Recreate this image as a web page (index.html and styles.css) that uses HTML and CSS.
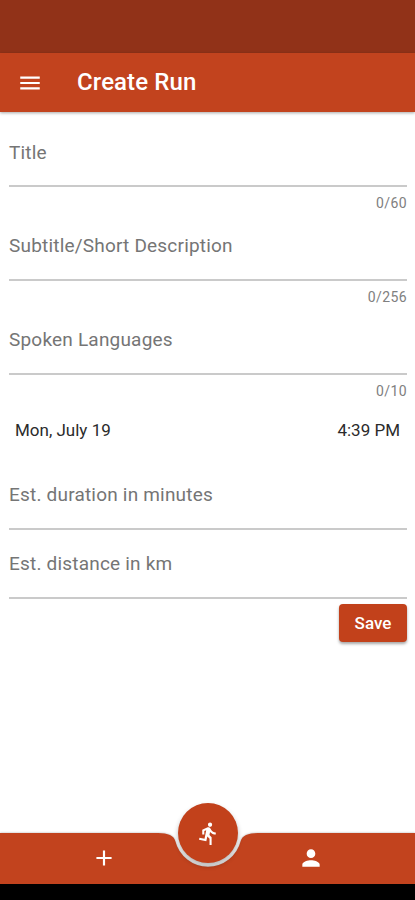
FILE: index.html
```html
<!DOCTYPE html>
<html lang="en">
<head>
    <meta charset="UTF-8">
    <meta name="viewport" content="width=device-width, initial-scale=1.0">
    <title>Create Run</title>
    <link rel="stylesheet" href="styles.css">
</head>
<body>
    <div class="status-bar"></div>
    <header class="app-bar">
        <svg class="menu-icon" viewBox="0 0 24 24"><path d="M3 18h18v-2H3v2zm0-5h18v-2H3v2zm0-7v2h18V6H3z"/></svg>
        <h1>Create Run</h1>
    </header>

    <main class="run-form">
        <div class="field field-first">
            <label>Title</label>
        </div>
        <div class="counter">0/60</div>

        <div class="field">
            <label>Subtitle/Short Description</label>
        </div>
        <div class="counter">0/256</div>

        <div class="field">
            <label>Spoken Languages</label>
        </div>
        <div class="counter">0/10</div>

        <div class="date-row">
            <span class="date">Mon, July 19</span>
            <span class="time">4:39 PM</span>
        </div>

        <div class="field">
            <label>Est. duration in minutes</label>
        </div>
        <div class="field">
            <label>Est. distance in km</label>
        </div>

        <button class="save-button">Save</button>
    </main>

    <nav class="bottom-bar">
        <!-- Bar background with the notch for the round button -->
        <svg class="bar-shape" viewBox="0 0 415 51">
            <path d="M0 0H158Q173.3 0 175.3 8.1A33.7 33.7 0 0 0 240.7 8.1Q242.7 0 258 0H415V51H0Z"/>
        </svg>
        <div class="nav-item">
            <svg viewBox="0 0 24 24"><path d="M19 13h-6v6h-2v-6H5v-2h6V5h2v6h6v2z"/></svg>
        </div>
        <div class="nav-item">
            <svg viewBox="0 0 24 24"><path d="M12 12c2.21 0 4-1.79 4-4s-1.79-4-4-4-4 1.79-4 4 1.79 4 4 4zm0 2c-2.67 0-8 1.34-8 4v2h16v-2c0-2.66-5.33-4-8-4z"/></svg>
        </div>
        <div class="run-button">
            <svg viewBox="0 0 24 24"><path d="M13.49 5.48c1.1 0 2-.9 2-2s-.9-2-2-2-2 .9-2 2 .9 2 2 2zm-3.6 13.9l1-4.4 2.1 2v6h2v-7.5l-2.1-2 .6-3c1.3 1.5 3.3 2.5 5.5 2.5v-2c-1.9 0-3.5-1-4.3-2.4l-1-1.6c-.4-.6-1-1-1.7-1-.3 0-.5.1-.8.1l-5.2 2.2v4.7h2v-3.4l1.8-.7-1.6 8.1-4.9-1-.4 2 7 1.4z"/></svg>
        </div>
    </nav>
    <div class="system-bar"></div>
</body>
</html>
```

FILE: styles.css
```css
* {
    box-sizing: border-box;
}

body {
    font-family: Roboto, "Liberation Sans", sans-serif;
    background-color: #fff;
    display: flex;
    flex-direction: column;
    height: 100vh;
    margin: 0;
    overflow: hidden;
}

svg {
    display: block;
    fill: #fff;
}

.status-bar {
    height: 53px;
    background: #913218;
}

.app-bar {
    display: flex;
    align-items: center;
    height: 59px;
    padding-left: 17px;
    background: #c2431e;
    box-shadow: 0 1px 3px rgba(0, 0, 0, 0.35);
}

.menu-icon {
    width: 26px;
    height: 26px;
}

.app-bar h1 {
    margin: 0 0 1px 34px;
    color: #fff;
    font-size: 24px;
    font-weight: 500;
    letter-spacing: 0.1px;
}

.run-form {
    display: flex;
    flex-direction: column;
    flex: 1;
    padding: 6px 8px 0 9px;
}

.field {
    display: flex;
    align-items: center;
    height: 69px;
    border-bottom: 2px solid #cacaca;
    color: #757575;
    font-size: 19px;
    letter-spacing: 0.2px;
}

.field-first {
    padding-top: 1px;
}

.counter {
    height: 25px;
    padding-top: 7px;
    color: #808080;
    font-size: 14px;
    line-height: 19px;
    letter-spacing: 0.4px;
    text-align: right;
}

.date-row {
    display: flex;
    justify-content: space-between;
    height: 61px;
    padding: 18px 7px 0 6px;
    color: #2b2b2b;
    font-size: 17px;
    line-height: 24px;
}

.save-button {
    align-self: flex-end;
    width: 68px;
    height: 38px;
    margin-top: 5px;
    padding: 0;
    background: #c2411b;
    color: #fff;
    border: none;
    border-radius: 4px;
    box-shadow: 0 2px 3px rgba(0, 0, 0, 0.35);
    font-family: inherit;
    font-size: 17px;
    font-weight: 500;
}

/* Bottom navigation */
.bottom-bar {
    position: relative;
    display: flex;
    height: 51px;
}

.bar-shape {
    position: absolute;
    top: 0;
    left: 0;
    width: 415px;
    height: 51px;
    fill: #c2431e;
    overflow: visible;
    filter: drop-shadow(0 0 1px rgba(0, 0, 0, 0.3));
}

.nav-item {
    position: relative;
    display: flex;
    flex: 1;
    align-items: center;
    justify-content: center;
    padding-bottom: 1px;
}

.nav-item svg {
    width: 26px;
    height: 26px;
}

.run-button {
    position: absolute;
    top: -30px;
    left: 178px;
    display: flex;
    align-items: center;
    justify-content: center;
    width: 60px;
    height: 60px;
    border-radius: 50%;
    background: #c2411b;
    box-shadow: 0 3px 5px rgba(0, 0, 0, 0.3);
}

.run-button svg {
    width: 25px;
    height: 25px;
}

.system-bar {
    height: 16px;
    background: #000;
}
```
